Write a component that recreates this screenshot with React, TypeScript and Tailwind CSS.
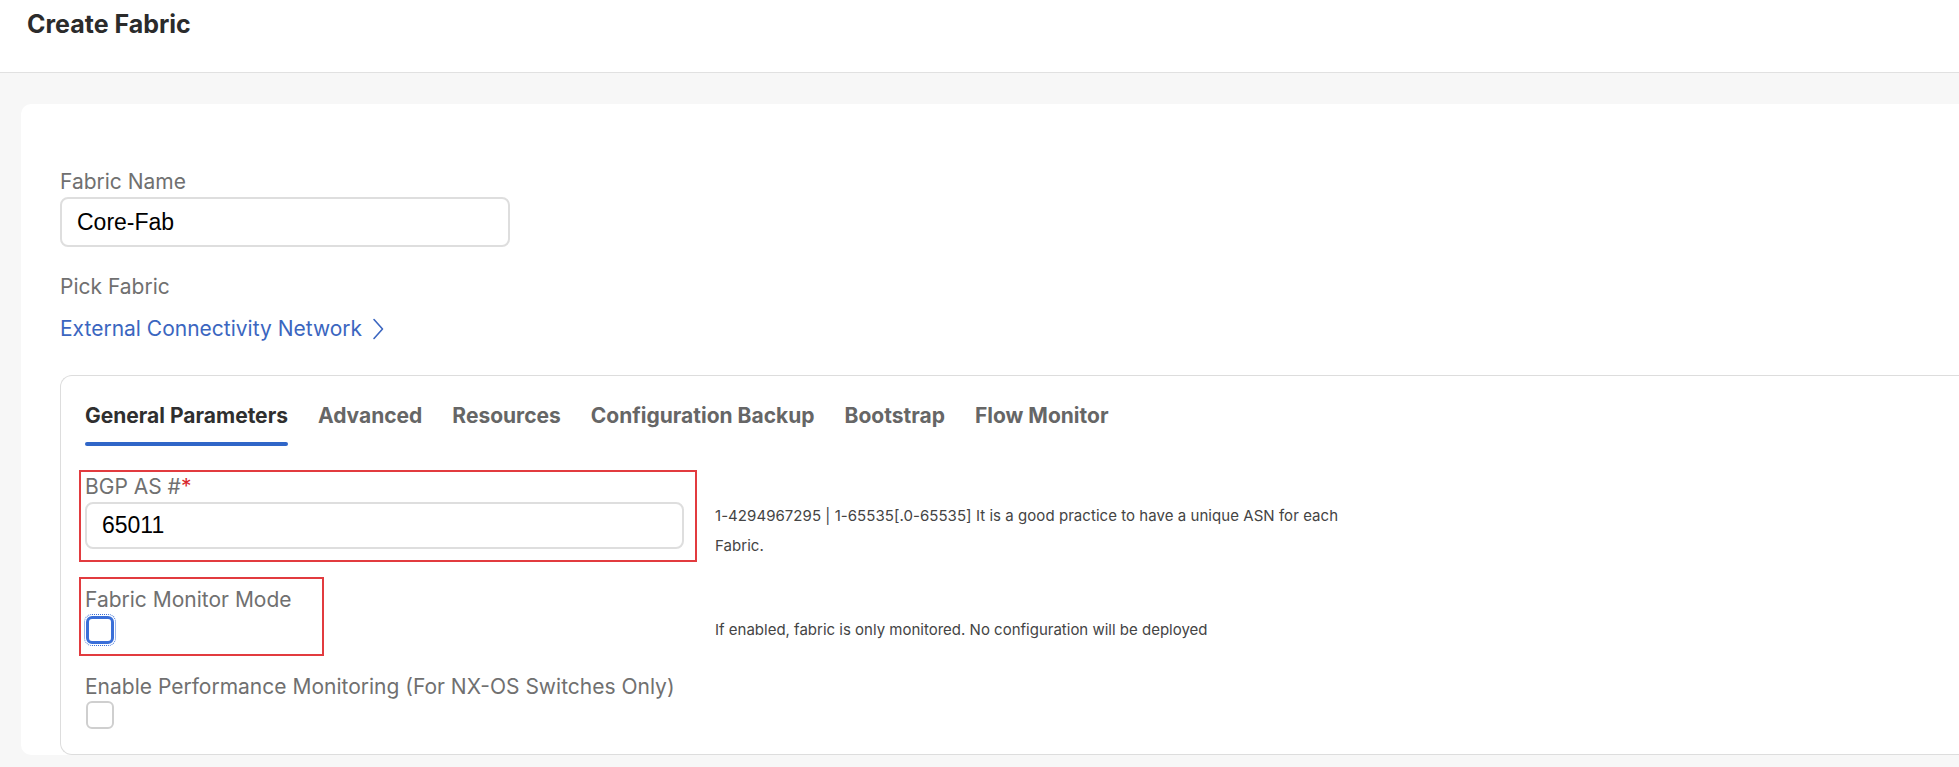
const tabs = ["General Parameters", "Advanced", "Resources", "Configuration Backup", "Bootstrap", "Flow Monitor"];

function Chevron() {
  return (
    <svg width="12" height="22" viewBox="0 0 12 22" fill="none" className="ml-[10px]">
      <polyline points="2,1.5 10.5,11 2,20.5" stroke="#3b66c0" strokeWidth="1.6" strokeLinecap="round" strokeLinejoin="round" />
    </svg>
  );
}

export default function App() {
  return (
    <div className="min-h-screen bg-[#f7f7f7] font-['Inter',sans-serif]">
      <header className="h-[73px] bg-white border-b border-[#e1e1e1] px-[27px] pt-[9px]">
        <h1 className="text-[25px] font-bold leading-[30px] text-[#2b2b2b]">Create Fabric</h1>
      </header>

      <main className="pl-[21px] pt-[31px]">
        <div className="bg-white rounded-l-[10px] pl-[39px] pt-[66px]">
          {/* Fabric name */}
          <label className="block text-[21px] leading-[24px] text-[#707070]">Fabric Name</label>
          <div className="mt-[3px] w-[450px] h-[50px] border-2 border-[#dedede] rounded-[8px] px-[15px] flex items-center font-['Liberation_Sans',sans-serif] text-[23px] text-black">
            Core-Fab
          </div>

          <div className="mt-[28px] text-[21px] leading-[24px] text-[#707070]">Pick Fabric</div>
          <a className="mt-[18px] flex items-center text-[21px] leading-[24px] text-[#3b66c0] w-fit cursor-pointer">
            External Connectivity Network
            <Chevron />
          </a>

          {/* Settings panel */}
          <div className="mt-[34px] border border-r-0 border-[#dddddd] rounded-l-[12px] pl-[24px] pt-[28px] pb-[25px]">
            <nav className="flex gap-[30px]">
              {tabs.map((t, i) => (
                <div key={t} className="flex flex-col">
                  <span className={`text-[21px] leading-[24px] font-bold ${i === 0 ? "text-[#2f2f2f]" : "text-[#666666]"}`}>{t}</span>
                  {i === 0 && <span className="mt-[14px] h-[4px] rounded-full bg-[#3066c8]" />}
                </div>
              ))}
            </nav>

            <div className="flex items-start mt-[24px]">
              <div className="-ml-[6px] w-[618px] border-2 border-[#e23b3f] pl-[4px] pr-[11px] pt-[3px] pb-[11px]">
                <label className="block text-[21px] leading-[24px] text-[#707070]">
                  BGP AS #<span className="text-[#d9262c]">*</span>
                </label>
                <div className="mt-[3px] h-[47px] border-2 border-[#dedede] rounded-[8px] px-[15px] flex items-center font-['Liberation_Sans',sans-serif] text-[23px] text-black">
                  65011
                </div>
              </div>
              <p className="ml-[18px] mt-[31px] w-[640px] text-[15px] tracking-[0.05px] leading-[30px] text-[#444444]">
                1-4294967295 | 1-65535[.0-65535] It is a good practice to have a unique ASN for each Fabric.
              </p>
            </div>

            <div className="flex items-start mt-[15px]">
              <div className="-ml-[6px] w-[245px] border-2 border-[#e23b3f] pl-[4px] pt-[9px] pb-[10px]">
                <label className="block text-[21px] leading-[24px] text-[#707070] whitespace-nowrap">Fabric Monitor Mode</label>
                <div className="mt-[4px] ml-[1px] w-[28px] h-[28px] rounded-[6px] border-[3px] border-[#3a6fd8] outline-1 outline-dotted outline-offset-1 outline-[#3a6fd8]" />
              </div>
              <p className="ml-[391px] mt-[38px] text-[15px] leading-[30px] text-[#444444]">
                If enabled, fabric is only monitored. No configuration will be deployed
              </p>
            </div>

            <label className="block mt-[19px] text-[21px] leading-[24px] text-[#707070]">
              Enable Performance Monitoring (For NX-OS Switches Only)
            </label>
            <div className="mt-[2px] ml-[1px] w-[28px] h-[28px] rounded-[6px] border-2 border-[#cfcfcf]" />
          </div>
        </div>
      </main>
    </div>
  );
}
